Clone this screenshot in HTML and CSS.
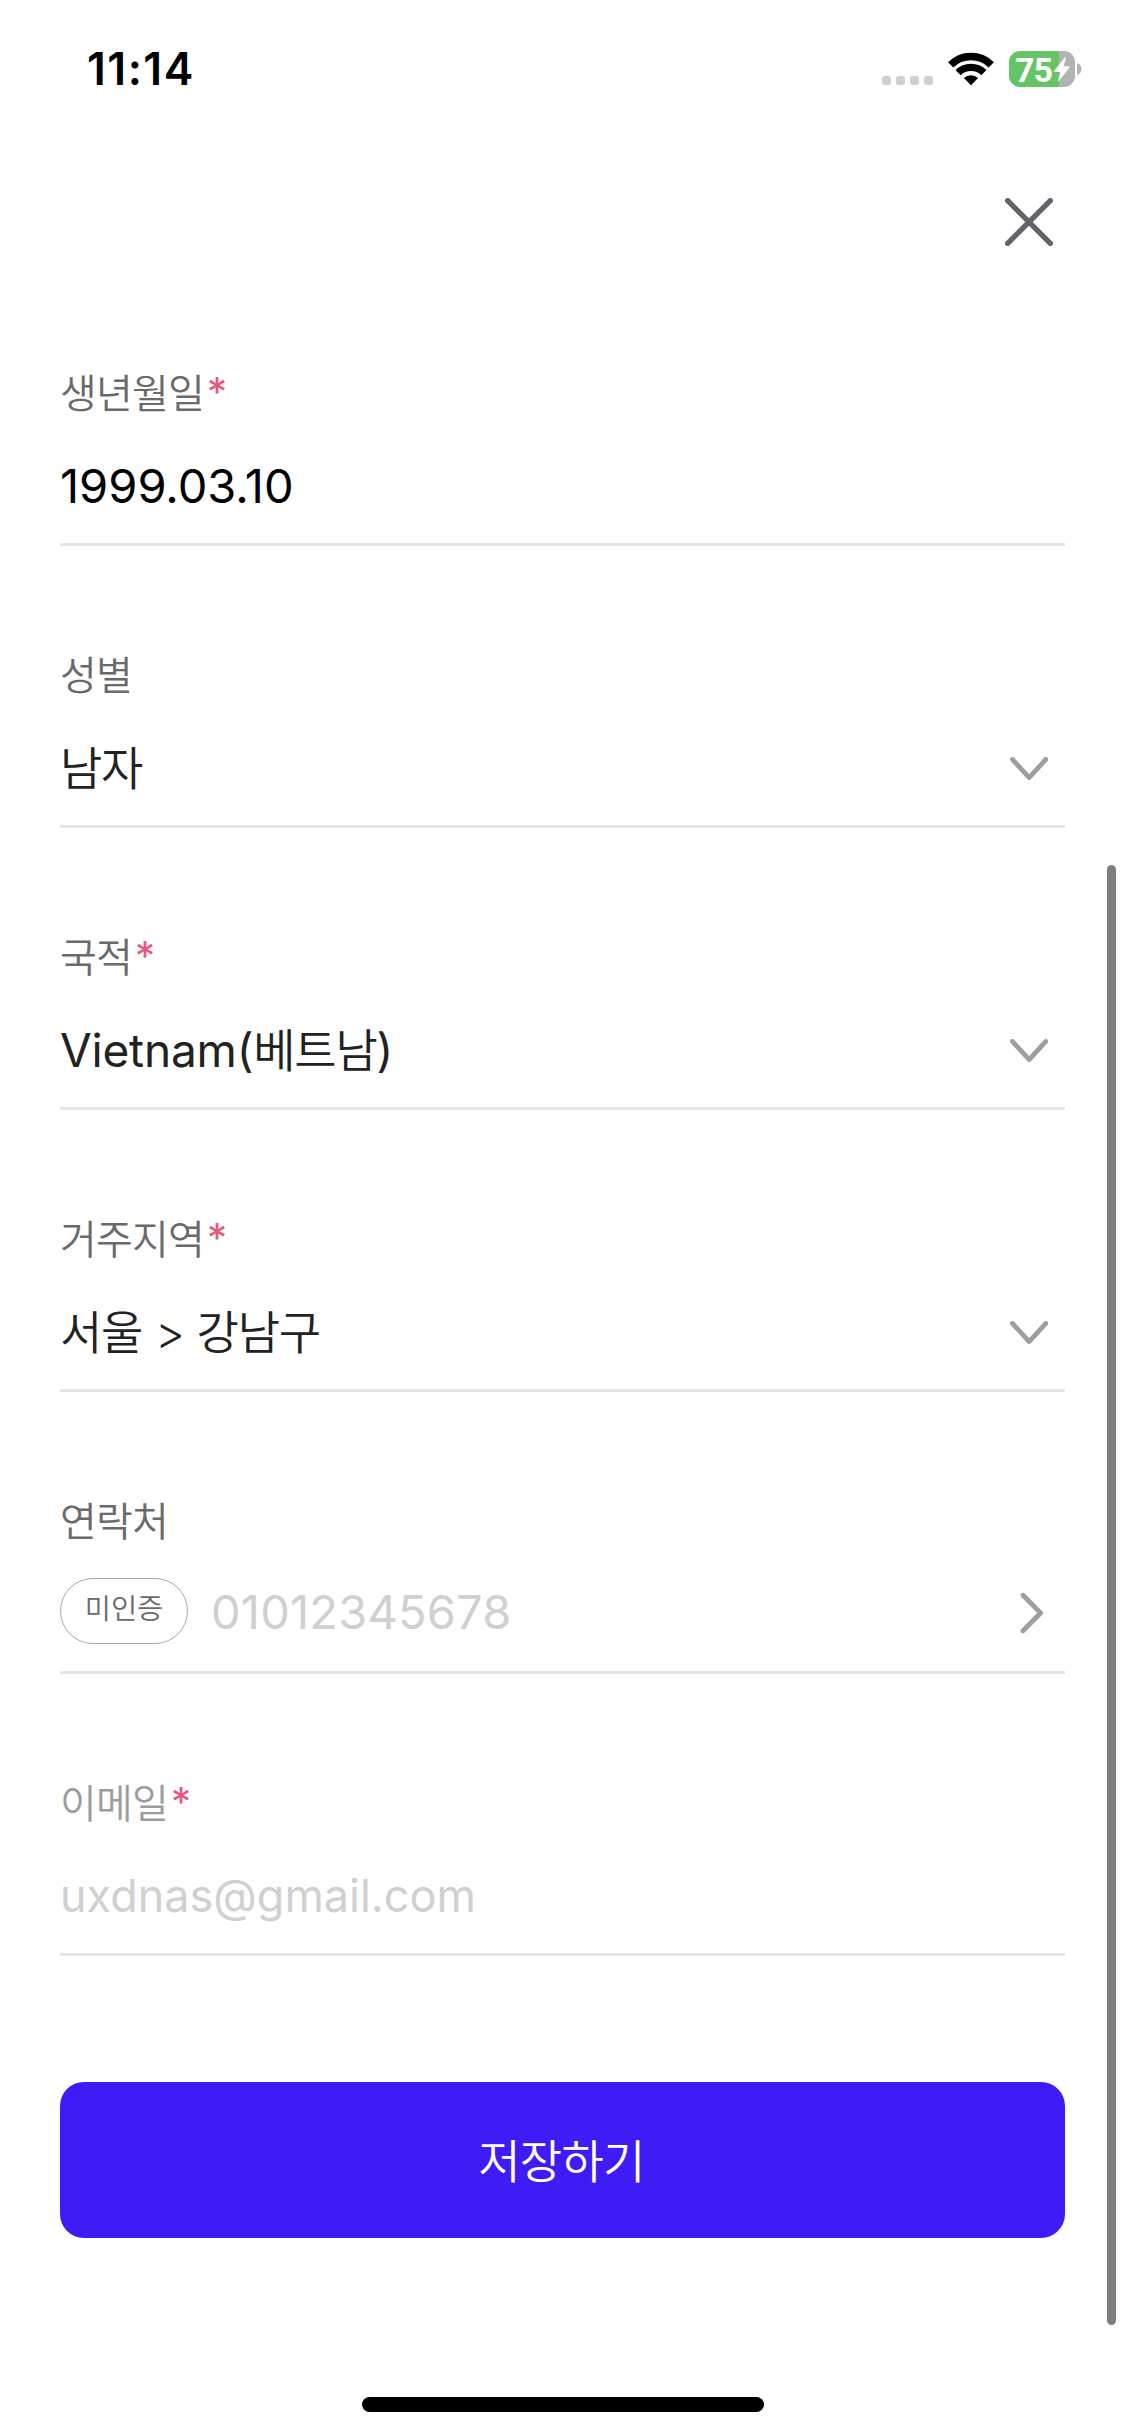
FILE: index.html
```
<!DOCTYPE html>
<html lang="ko">
<head>
<meta charset="utf-8">
<title>프로필</title>
<link rel="stylesheet" href="styles.css">
</head>
<body>
<div class="screen">
  <div class="status">
    <div class="time">11:14</div>
    <div class="signal"><i class="dot"></i><i class="dot"></i><i class="dot"></i><i class="dot"></i></div>
    <svg class="wifi" width="46" height="34" viewBox="0 0 46 34">
      <g fill="none" stroke="#000" stroke-width="7.4">
        <path d="M2.7 12.9A28.8 28.8 0 0 1 43.3 12.9"/>
        <path d="M10.1 20.7A18.4 18.4 0 0 1 35.9 20.7"/>
      </g>
      <path d="M23 33.2L15.9 26A10.4 10.4 0 0 1 30.1 26Z"/>
    </svg>
    <div class="battery">
      <span class="percent">75</span>
      <svg class="bolt" width="18" height="26" viewBox="0 0 18 26"><path d="M12 1.2L1.2 14.8Q.6 16 1.8 16H7.6L5 24.6Q5 25.6 6 24.8L16.6 11.4Q17.2 10.2 16 10.2H10.6L13 1.8Q13.2.4 12 1.2Z" fill="#fff"/></svg>
    </div>
    <svg class="cap" width="5" height="14" viewBox="0 0 5 14"><path d="M0 1Q4.4 2.6 4.4 7T0 13Z" fill="#b3b3b3"/></svg>
  </div>
  <div class="nav">
    <svg width="48" height="48" viewBox="0 0 48 48" fill="none" stroke="#63636b" stroke-width="5.4" stroke-linecap="round"><path d="M2.7 2.7L45.3 45.3M45.3 2.7L2.7 45.3"/></svg>
  </div>
  <form class="form">
    <div class="field">
      <div class="label"><span>생년월일</span><span class="req">*</span></div>
      <div class="value date">1999.03.10</div>
    </div>
    <div class="field">
      <div class="label"><span>성별</span></div>
      <div class="value"><span>남자</span><svg class="down" width="38" height="24" viewBox="0 0 38 24"><path d="M2.4 2.4L19.2 20.6L35.8 2.4"/></svg></div>
    </div>
    <div class="field">
      <div class="label"><span>국적</span><span class="req">*</span></div>
      <div class="value"><span><span class="latin">Vietnam(</span>베트남<span class="latin">)</span></span><svg class="down" width="38" height="24" viewBox="0 0 38 24"><path d="M2.4 2.4L19.2 20.6L35.8 2.4"/></svg></div>
    </div>
    <div class="field">
      <div class="label"><span>거주지역</span><span class="req">*</span></div>
      <div class="value"><span>서울 &gt; 강남구</span><svg class="down" width="38" height="24" viewBox="0 0 38 24"><path d="M2.4 2.4L19.2 20.6L35.8 2.4"/></svg></div>
    </div>
    <div class="field">
      <div class="label"><span>연락처</span></div>
      <div class="value phone"><span class="badge">미인증</span><span class="number">01012345678</span><svg class="next" width="24" height="42" viewBox="0 0 24 42"><path d="M3 3.2L20.6 21L3 38.8"/></svg></div>
    </div>
    <div class="field">
      <div class="label muted"><span>이메일</span><span class="req">*</span></div>
      <div class="value email">uxdnas@gmail.com</div>
    </div>
    <button class="save" type="button">저장하기</button>
  </form>
  <div class="home"></div>
  <div class="scrollbar"></div>
</div>
</body>
</html>
```
FILE: styles.css
```
* { box-sizing: border-box; }
body { margin: 0; background: #fff; }
.screen {
  position: relative;
  display: flex;
  flex-direction: column;
  width: 1125px;
  height: 2436px;
  background: #fff;
  font-family: Inter, "Noto Sans CJK KR", sans-serif;
  color: #222;
}
.status {
  display: flex;
  align-items: center;
  height: 138px;
  padding: 0 43px 0 87px;
}
.time {
  margin-right: auto;
  font-size: 44.5px;
  line-height: 60px;
  font-weight: 600;
  letter-spacing: 1.5px;
  color: #000;
}
.signal { display: flex; gap: 5px; margin: 23px 15px 0 0; }
.dot { width: 9px; height: 9px; border-radius: 3px; background: #cfcfcf; }
.wifi { margin-right: 15px; }
.battery {
  display: flex;
  align-items: center;
  width: 66px;
  height: 36px;
  padding-left: 6px;
  border-radius: 11px;
  background: linear-gradient(90deg, #65c466 50px, #b3b3b3 50px);
}
.percent {
  width: 38px;
  padding-top: 1px;
  font-family: Roboto, sans-serif;
  font-size: 34px;
  line-height: 36px;
  font-weight: 700;
  letter-spacing: -1px;
  color: #fff;
}
.bolt { flex: none; }
.cap { margin-left: 2px; }
.nav {
  display: flex;
  justify-content: flex-end;
  height: 126px;
  padding: 60px 72px 0 0;
}
.form { display: flex; flex-direction: column; padding: 0 60px; }
.field {
  display: flex;
  flex-direction: column;
  height: 282px;
  padding-top: 97px;
  border-bottom: 3px solid #e5e5e5;
}
.label {
  display: flex;
  font-family: "Noto Sans CJK KR", sans-serif;
  font-size: 40px;
  line-height: 60px;
  font-weight: 350;
  letter-spacing: -.8px;
  color: #6a6a6a;
}
.muted { color: #9c9c9c; }
.req {
  margin: 1px 0 -1px 3px;
  font-family: Inter, sans-serif;
  font-weight: 400;
  letter-spacing: 0;
  color: #e8557f;
}
.value {
  display: flex;
  align-items: center;
  justify-content: space-between;
  height: 60px;
  margin: auto 0 27px;
  font-size: 46px;
  line-height: 60px;
  font-weight: 350;
  letter-spacing: -1.2px;
  word-spacing: 1px;
}
.latin { font-weight: 400; letter-spacing: -.2px; }
.date { font-size: 47px; font-weight: 400; letter-spacing: 0; color: #000; }
.email { font-size: 45px; font-weight: 400; letter-spacing: 0; color: #d0d0d0; }
.down, .next {
  fill: none;
  stroke: #9e9e9e;
  stroke-width: 4.8;
  stroke-linecap: round;
  stroke-linejoin: round;
}
.down { margin: 1px 17px 0 0; }
.phone { justify-content: flex-start; margin-bottom: 30px; }
.badge {
  display: flex;
  justify-content: center;
  width: 128px;
  height: 66px;
  margin: 0 23px 0 0;
  border: 1px solid #a8a8a8;
  border-radius: 33px;
  font-family: "Noto Sans CJK KR", sans-serif;
  font-size: 28.5px;
  line-height: 56px;
  letter-spacing: 0;
  color: #6a6a6a;
}
.number { padding-top: 1px; font-size: 47px; font-weight: 400; letter-spacing: .2px; color: #d0d0d0; }
.next { margin: 3px 21px 0 auto; }
.save {
  height: 156px;
  margin-top: 126px;
  padding: 0 2px 4px 0;
  border: 0;
  border-radius: 24px;
  background: #3f1bf8;
  color: #fff;
  font-family: "Noto Sans CJK KR", sans-serif;
  font-size: 46px;
  font-weight: 350;
  letter-spacing: -.7px;
}
.home {
  width: 402px;
  height: 15px;
  margin: auto auto 24px;
  border-radius: 8px;
  background: #000;
}
.scrollbar {
  position: absolute;
  top: 865px;
  right: 9px;
  width: 9px;
  height: 1460px;
  border-radius: 5px;
  background: #7f7f7f;
}
```
